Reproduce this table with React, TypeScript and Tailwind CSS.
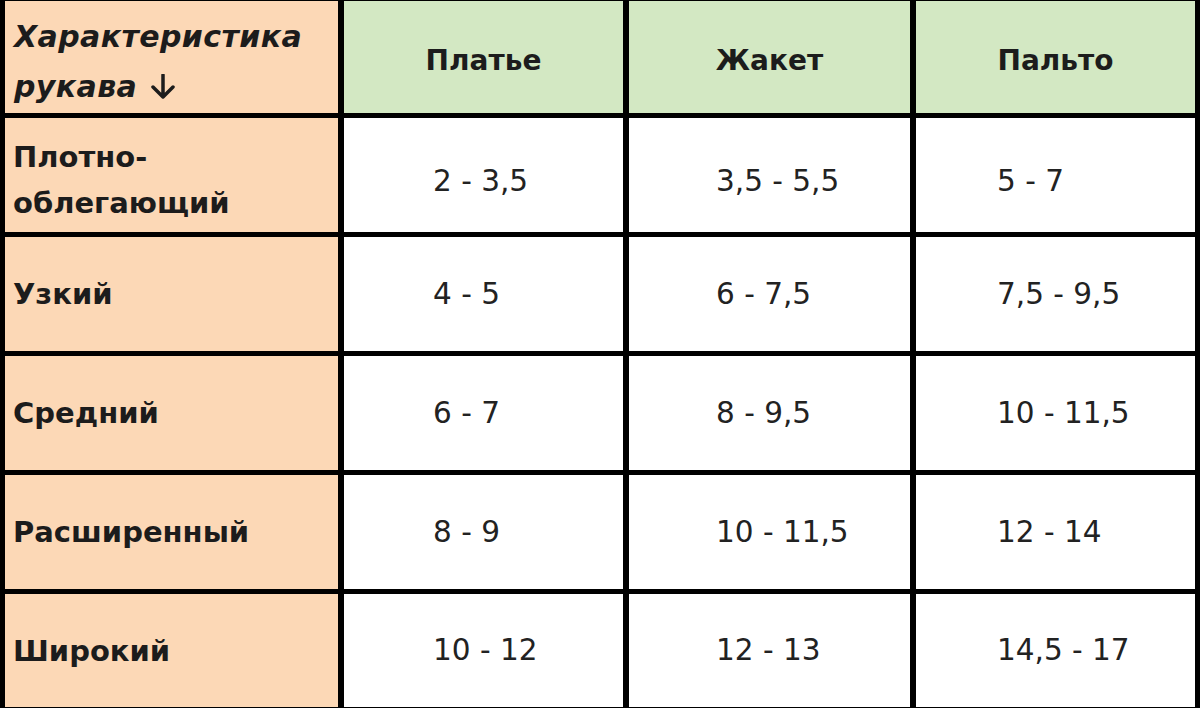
const headers = ['Платье', 'Жакет', 'Пальто'];

const rows: { label: string[]; values: string[] }[] = [
  { label: ['Плотно-', 'облегающий'], values: ['2 - 3,5', '3,5 - 5,5', '5 - 7'] },
  { label: ['Узкий'], values: ['4 - 5', '6 - 7,5', '7,5 - 9,5'] },
  { label: ['Средний'], values: ['6 - 7', '8 - 9,5', '10 - 11,5'] },
  { label: ['Расширенный'], values: ['8 - 9', '10 - 11,5', '12 - 14'] },
  { label: ['Широкий'], values: ['10 - 12', '12 - 13', '14,5 - 17'] },
];

// left padding of the value text in each data column
const valuePad = ['pl-[89px]', 'pl-[87px]', 'pl-[81px]'];

function DownArrow() {
  return (
    <svg width="28" height="26" viewBox="0 0 28 26" className="ml-[12px] inline-block">
      <path d="M14 1 V23 M4 13 L14 23 L24 13" fill="none" stroke="#1c1c1c" strokeWidth="3.5" strokeLinecap="round" strokeLinejoin="round" />
    </svg>
  );
}

export default function App() {
  return (
    <div className="h-[708px] w-[1200px] overflow-hidden bg-black pt-px pb-px pl-[5px] pr-[5px]">
      <div className="grid h-full grid-cols-[333px_279px_281px_279px] grid-rows-[112px_114px_114px_114px_114px_113px] gap-x-[6px] gap-y-[5px]">
        {/* corner cell */}
        <div className="flex flex-col bg-[#fcd8b6] pl-[9px] pt-[11px] font-['DejaVu_Sans',sans-serif] text-[30px] italic font-bold leading-[50px] tracking-[0.4px] text-[#1c1c1c]">
          <span>Характеристика</span>
          <span className="flex items-center">
            рукава
            <DownArrow />
          </span>
        </div>

        {headers.map((h) => (
          <div
            key={h}
            className="flex items-center justify-center bg-[#d3e8c3] pt-[8px] font-['DejaVu_Sans',sans-serif] text-[28px] font-bold text-[#1c1c1c]"
          >
            {h}
          </div>
        ))}

        {rows.map((r, ri) => (
          <>
            <div
              key={r.label[0]}
              className={`flex flex-col justify-center bg-[#fcd8b6] pl-[8px] font-['DejaVu_Sans',sans-serif] text-[29px] font-bold leading-[46px] text-[#1c1c1c] ${ri === 0 ? 'pt-[10px]' : ''}`}
            >
              {r.label.map((l) => (
                <span key={l}>{l}</span>
              ))}
            </div>
            {r.values.map((v, i) => (
              <div
                key={r.label[0] + i}
                className={`flex items-center bg-white ${valuePad[i]} font-['DejaVu_Sans',sans-serif] text-[29.5px] text-[#222222] ${ri === 0 ? 'pt-[12px]' : ''}`}
              >
                {v}
              </div>
            ))}
          </>
        ))}
      </div>
    </div>
  );
}
